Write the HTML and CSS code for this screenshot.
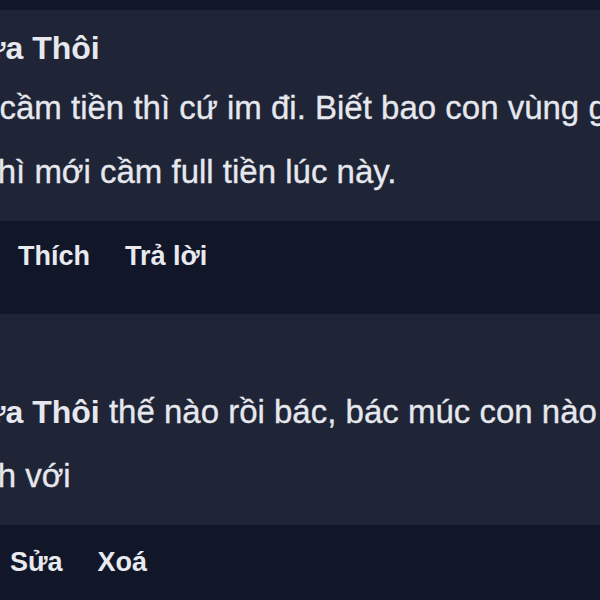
FILE: index.html
```html
<!DOCTYPE html>
<html lang="vi">
<head>
<meta charset="utf-8">
<title>Bình luận</title>
<link rel="stylesheet" href="styles.css">
</head>
<body>
<div class="thread">
  <div class="comment">
    <div class="card">
      <div class="author">Vừa Thôi</div>
      <p class="text">Ai cầm tiền thì cứ im đi. Biết bao con vùng giá đẹp<br>à thì mới cầm full tiền lúc này.</p>
    </div>
    <div class="actions">
      <button class="act">Thích</button>
      <button class="act">Trả lời</button>
    </div>
  </div>
  <div class="comment">
    <div class="card">
      <div class="author">Tú</div>
      <p class="text"><span class="mention">Vừa Thôi</span> thế nào rồi bác, bác múc con nào thế, chỉ giáo cho<br>anh với</p>
    </div>
    <div class="actions actions-own">
      <button class="act">Sửa</button>
      <button class="act">Xoá</button>
    </div>
  </div>
</div>
</body>
</html>
```
FILE: styles.css
```css
html, body {
  margin: 0;
  padding: 0;
  background: #111728;
  overflow: hidden;
  width: 600px;
  height: 600px;
}
body {
  font-family: "Liberation Sans", Arial, sans-serif;
  color: #e6e8ee;
}
.thread {
  margin-left: -39px;
  padding-top: 10px;
  width: 1000px;
}
.card {
  background: #1f2536;
  padding: 18px 0 17px 0;
}
.author {
  font-weight: bold;
  font-size: 32px;
  line-height: 40px;
  white-space: nowrap;
}
.text {
  margin: 8px 0 0;
  font-size: 33px;
  line-height: 64px;
  white-space: nowrap;
  -webkit-text-stroke: 0.3px currentColor;
}
.mention {
  font-weight: bold;
  font-size: 32px;
  -webkit-text-stroke: 0;
}
.actions {
  display: flex;
  gap: 35px;
  padding: 17px 0 40px 57px;
}
.actions-own {
  padding-left: 49px;
  padding-top: 19px;
}
.act {
  background: none;
  border: 0;
  padding: 0;
  color: #e8eaf0;
  font-family: "Liberation Sans", Arial, sans-serif;
  font-weight: bold;
  font-size: 27px;
  line-height: 36px;
  cursor: pointer;
}
```
